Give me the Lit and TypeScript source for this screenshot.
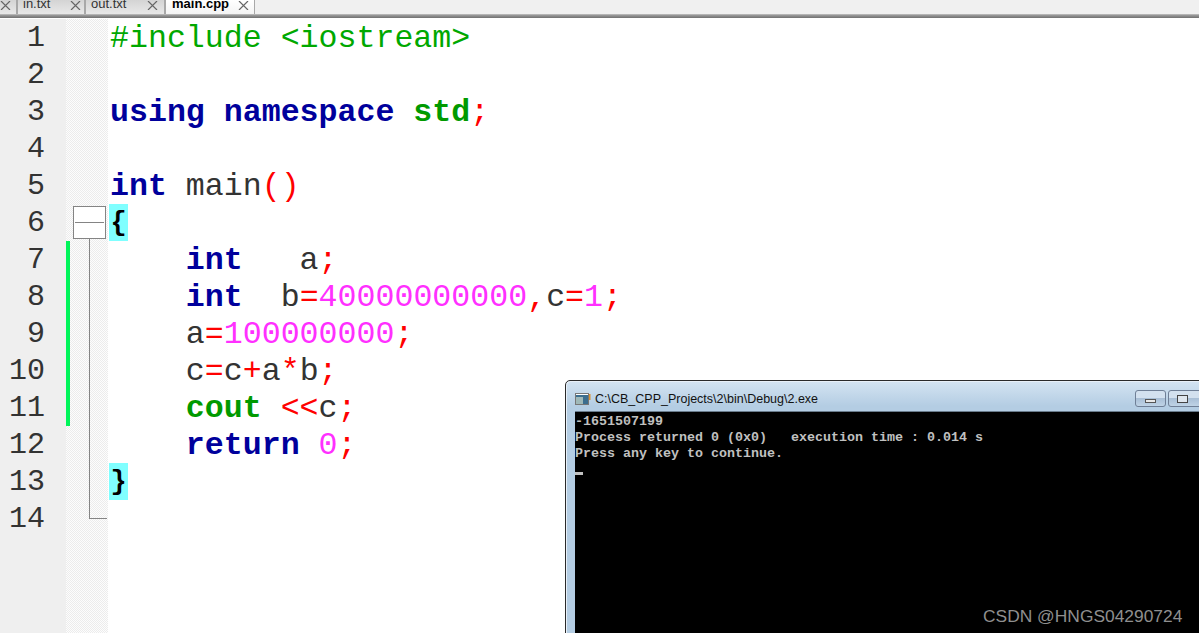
import { LitElement, html, css, svg } from "lit";
import { customElement } from "lit/decorators.js";

type Tok = [string, string];
const K = "kw", R = "op", M = "numv", P = "plain", I = "inc", S = "str";
const LINES: Tok[][] = [
  [["#include <iostream>", I]],
  [],
  [["using namespace", K], [" ", P], ["std", S], [";", R]],
  [],
  [["int", K], [" main", P], ["()", R]],
  [["{", "br"]],
  [["    ", P], ["int", K], ["   a", P], [";", R]],
  [["    ", P], ["int", K], ["  b", P], ["=", R], ["40000000000", M], [",", R], ["c", P], ["=", R], ["1", M], [";", R]],
  [["    a", P], ["=", R], ["100000000", M], [";", R]],
  [["    c", P], ["=", R], ["c", P], ["+", R], ["a", P], ["*", R], ["b", P], [";", R]],
  [["    ", P], ["cout", S], [" ", P], ["<<", R], ["c", P], [";", R]],
  [["    ", P], ["return", K], [" ", P], ["0", M], [";", R]],
  [["}", "br"]],
  [],
];

@customElement("app-root")
export class AppRoot extends LitElement {
  static styles = css`
    :host { display: block; width: 1199px; height: 633px; overflow: hidden; position: relative; background: #fff; }
    .tabs { display: flex; height: 19px; box-sizing: border-box; background: #f0f0f0; overflow: hidden;
      border-bottom: 1px solid #fff; font: 13px "Liberation Sans", sans-serif; color: #333; position: relative; }
    .tabs::after { content: ""; position: absolute; left: 0; right: 0; top: 14px; height: 4px;
      background: linear-gradient(#c8c8c8, #9a9a9a 30%, #707070); }
    .tab { display: flex; box-sizing: border-box; height: 14px; background: linear-gradient(#d4d4d4, #e8e8e8);
      border-right: 1px solid #a8a8a8; border-left: 1px solid #a8a8a8; }
    .tab span { flex: 1; line-height: 15px; margin-top: -4px; }
    .tab svg { flex: none; margin-top: 1px; }
    .t0 { width: 17px; border-left: 0; }
    .t1 { width: 68px; padding: 0 3px 0 5px; }
    .t2 { width: 80px; padding: 0 6px 0 5px; }
    .t3 { width: 90px; padding: 0 5px 0 6px; background: linear-gradient(#fff, #f4f4f4); font-weight: bold; color: #000; }
    .editor { display: flex; height: 614px; }
    .nums { width: 66px; background: #efefef; flex: none; padding-right: 21px; box-sizing: border-box; }
    .num { height: 37px; text-align: right; font: 30px/38px "Liberation Mono", monospace; color: #333; }
    .fold { width: 42px; flex: none; position: relative;
      background-image: repeating-conic-gradient(#ececec 0 25%, #fdfdfd 0 50%);
      background-size: 2px 2px; }
    .change { position: absolute; left: 0; top: 222px; width: 4px; height: 185px; background: #00f55a; }
    .box { position: absolute; left: 7px; top: 187px; width: 33px; height: 33px; box-sizing: border-box; background: #fff; border: 1px solid #848484; }
    .box::after { content: ""; position: absolute; left: 1px; right: 1px; top: 15px; height: 1px; background: #848484; }
    .vline { position: absolute; left: 23px; top: 219px; width: 1px; height: 280px; background: #848484; }
    .hline { position: absolute; left: 23px; top: 499px; width: 18px; height: 1px; background: #848484; }
    .code { flex: 1; font: 31.6px/39px "Liberation Mono", monospace; color: #333; padding-left: 2px; white-space: pre; }
    .line { height: 37px; }
    .kw { color: #00009c; font-weight: bold; }
    .str { color: #009a00; font-weight: bold; }
    .inc { color: #00a800; }
    .op { color: #f00; }
    .numv { color: #ff30ff; }
    .br { display: inline-block; vertical-align: top; height: 37px; margin-left: -1px; background: #80ffff; color: #000; font-weight: bold; font-size: 27px; line-height: 38px; width: 19px; text-align: center; }
    .console { position: absolute; left: 565px; top: 380px; width: 640px; height: 260px; box-sizing: border-box;
      background: linear-gradient(#d4e4f2, #b4cde3 25px); border: 1px solid #2a2a2a; border-radius: 5px 0 0 0;
      padding-left: 9px; display: flex; flex-direction: column; box-shadow: inset 1px 1px 0 #e8f0f8; }
    .title { height: 30px; flex: none; box-sizing: border-box; padding-top: 5px; display: flex; align-items: center; gap: 4px;
      font: 12.5px "Liberation Sans", sans-serif; color: #111; position: relative; }
    .btn { position: absolute; top: 9px; width: 31px; height: 17px; box-sizing: border-box; border: 1px solid #6f7f96; border-radius: 3px;
      background: linear-gradient(#d3e1ef 0 45%, #a9bfd6 50%, #bfd3e6); display: flex; align-items: center; justify-content: center; }
    .b1 { left: 560px; }
    .b2 { left: 593px; width: 40px; justify-content: flex-start; padding-left: 8px; }
    .min { width: 9px; height: 2px; margin-top: 4px; background: #e8e8e8; border: 1px solid #555; }
    .max { width: 9px; height: 6px; background: #dfe6ee; border: 1px solid #444; }
    .screen { flex: 1; background: #000; color: #c0c0c0; font: bold 13.33px/16px "Liberation Mono", monospace; white-space: pre; padding-top: 2px; border-top: 1px solid #6a7c8c; }
    .cursor { width: 8px; height: 3px; background: #c0c0c0; margin-top: 10px; }
    .mark { position: absolute; left: 983px; top: 606px; font: 17.4px/20px "Liberation Sans", sans-serif; color: #8f8f8f; }
  `;

  private x() {
    return html`<svg width="11" height="9" viewBox="0 0 11 9">${svg`<path d="M1 0 L10 9 M10 0 L1 9" stroke="#666" stroke-width="1.2" fill="none"/>`}</svg>`;
  }

  private line(toks: Tok[]) {
    return html`<div class="line">${toks.map(([t, c]) => html`<span class=${c}>${t}</span>`)}</div>`;
  }

  render() {
    return html`
      <div class="tabs">
        <div class="tab t0">${this.x()}</div>
        <div class="tab t1"><span>in.txt</span>${this.x()}</div>
        <div class="tab t2"><span>out.txt</span>${this.x()}</div>
        <div class="tab t3"><span>main.cpp</span>${this.x()}</div>
      </div>
      <div class="editor">
        <div class="nums">${LINES.map((_, i) => html`<div class="num">${i + 1}</div>`)}</div>
        <div class="fold">
          <div class="change"></div>
          <div class="vline"></div>
          <div class="hline"></div>
          <div class="box"></div>
        </div>
        <div class="code">${LINES.map((l) => this.line(l))}</div>
      </div>
      <div class="console">
        <div class="title">
          <svg width="16" height="14" viewBox="0 0 16 14">${svg`
            <rect x="0.5" y="1.5" width="13" height="11" fill="#fff" stroke="#777"/>
            <rect x="1" y="3" width="12" height="9" fill="#3c6e8f"/>
            <rect x="1" y="5" width="7" height="7" fill="#9fb8b8"/>
            <rect x="14" y="2" width="1.5" height="6" fill="#d89030"/>
          `}</svg>
          <span>C:\\CB_CPP_Projects\\2\\bin\\Debug\\2.exe</span>
          <div class="btn b1"><div class="min"></div></div>
          <div class="btn b2"><div class="max"></div></div>
        </div>
        <div class="screen">-1651507199
Process returned 0 (0x0)   execution time : 0.014 s
Press any key to continue.
<div class="cursor"></div></div>
      </div>
      <div class="mark">CSDN @HNGS04290724</div>
    `;
  }
}
